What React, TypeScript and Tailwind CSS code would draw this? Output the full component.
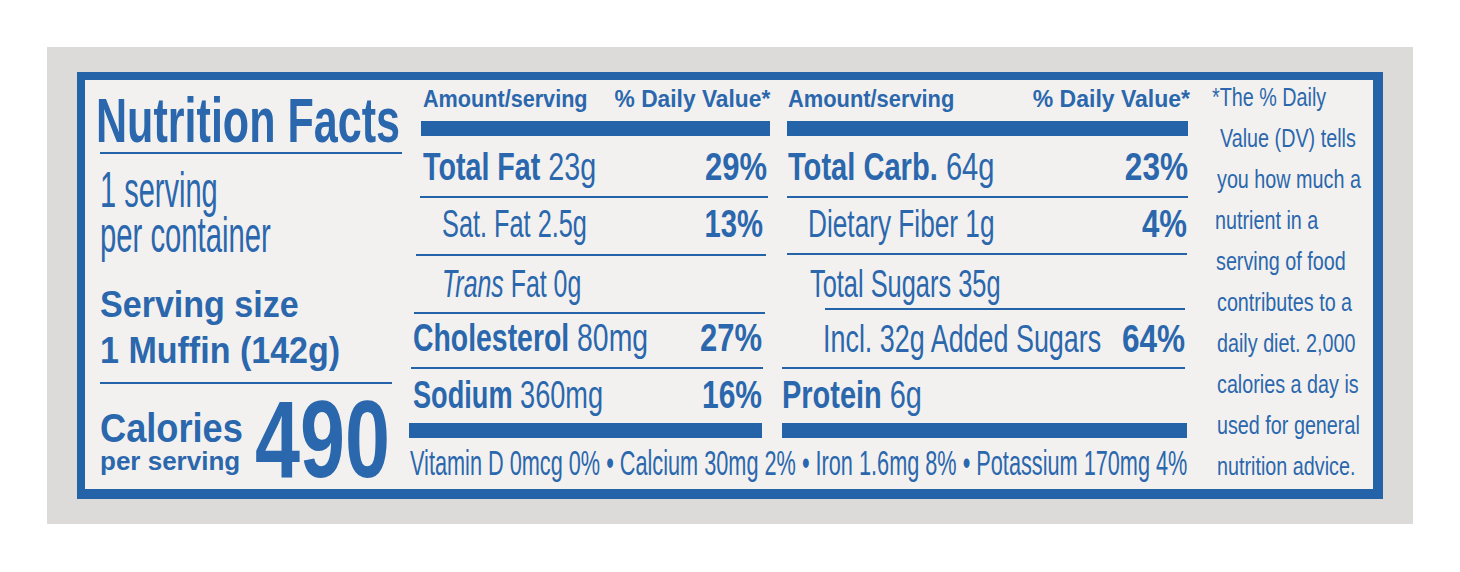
import React from 'react'

const Line = ({ className }: { className: string }) => <div className={`h-[2px] bg-[#2563a9] ${className}`} />

const Row = ({ className, left, right }: { className: string; left: React.ReactNode; right?: React.ReactNode }) => (
  <div className={`flex items-start justify-between ${className}`}>
    <div className="min-w-0 flex-1 whitespace-nowrap">{left}</div>
    {right}
  </div>
)

const LeftColumn = () => (
  <div className="flex w-[324px] shrink-0 flex-col pl-[15px] pr-[7px]">
    <div className="-ml-[4px] mt-[9px] h-[63px] whitespace-nowrap text-[63px] font-bold leading-none">
      <span className="inline-block origin-left scale-x-[0.684]">Nutrition Facts</span>
    </div>
    <Line className="w-[302px]" />
    <div className="mt-[14px] whitespace-nowrap text-[50px] leading-[45px]">
      <div className="h-[45px]">
        <span className="inline-block origin-left scale-x-[0.58]">1 serving</span>
      </div>
      <div className="h-[45px]">
        <span className="inline-block origin-left scale-x-[0.585]">per container</span>
      </div>
    </div>
    <div className="mt-[24px] whitespace-nowrap text-[37px] font-bold leading-[46px]">
      <div className="h-[46px]">
        <span className="inline-block origin-left scale-x-[0.92]">Serving size</span>
      </div>
      <div className="h-[46px]">
        <span className="inline-block origin-left scale-x-[0.92]">1 Muffin (142g)</span>
      </div>
    </div>
    <Line className="mt-[8px] w-[292px]" />
    <div className="flex h-[96px] items-start">
      <div className="w-[155px] shrink-0 whitespace-nowrap font-bold leading-none">
        <div className="mt-[24px] h-[40px] text-[40px]">
          <span className="inline-block origin-left scale-x-[0.905]">Calories</span>
        </div>
        <div className="h-[26px] text-[26px]">
          <span className="inline-block origin-left scale-x-[1.0]">per serving</span>
        </div>
      </div>
      <div className="h-[96px] whitespace-nowrap text-[110px] font-bold leading-none">
        <span className="inline-block origin-left scale-x-[0.735]">490</span>
      </div>
    </div>
  </div>
)

const Header = ({ className, a, b }: { className: string; a: string; b: string }) => (
  <div className={`mt-[8px] flex h-[23px] items-start justify-between text-[23px] font-bold leading-none ${className}`}>
    <div className="min-w-0 flex-1 whitespace-nowrap">
      <span className={`inline-block origin-left ${a}`}>Amount/serving</span>
    </div>
    <span className={`inline-block shrink-0 origin-right whitespace-nowrap ${b}`}>% Daily Value*</span>
  </div>
)

const FatColumn = () => (
  <div className="flex w-[361px] shrink-0 flex-col">
    <Header className="pl-[14px]" a="scale-x-[0.94]" b="scale-x-[0.99]" />
    <div className="ml-[12px] mt-[10px] h-[15px] bg-[#2563a9]" />
    <Row
      className="h-[60px] pl-[14px] pr-[3px] pt-[11px] text-[39px] leading-none"
      left={
        <span className="inline-block origin-left scale-x-[0.735]">
          <span className="font-bold">Total Fat</span> 23g
        </span>
      }
      right={<span className="inline-block shrink-0 origin-right scale-x-[0.795] font-bold">29%</span>}
    />
    <Line className="ml-[11px] mr-[2px]" />
    <Row
      className="h-[56px] pl-[33px] pr-[7px] pt-[7px] text-[38px] leading-none"
      left={<span className="inline-block origin-left scale-x-[0.666]">Sat. Fat 2.5g</span>}
      right={<span className="inline-block shrink-0 origin-right scale-x-[0.77] font-bold">13%</span>}
    />
    <Line className="ml-[7px] mr-[4px]" />
    <Row
      className="h-[56px] pl-[33px] pt-[9px] text-[38px] leading-none"
      left={
        <span className="inline-block origin-left scale-x-[0.655]">
          <span className="italic">Trans</span> Fat 0g
        </span>
      }
    />
    <Line className="ml-[5px] mr-[5px]" />
    <Row
      className="h-[53px] pl-[4px] pr-[8px] pt-[4px] text-[39px] leading-none"
      left={
        <span className="inline-block origin-left scale-x-[0.728]">
          <span className="font-bold">Cholesterol</span> 80mg
        </span>
      }
      right={<span className="inline-block shrink-0 origin-right scale-x-[0.795] font-bold">27%</span>}
    />
    <Line className="ml-[2px] mr-[7px]" />
    <Row
      className="h-[54px] pl-[4px] pr-[8px] pt-[6px] text-[39px] leading-none"
      left={
        <span className="inline-block origin-left scale-x-[0.696]">
          <span className="font-bold">Sodium</span> 360mg
        </span>
      }
      right={<span className="inline-block shrink-0 origin-right scale-x-[0.77] font-bold">16%</span>}
    />
    <div className="mr-[8px] h-[15px] bg-[#2563a9]" />
  </div>
)

const CarbColumn = () => (
  <div className="flex w-[408px] shrink-0 flex-col">
    <Header className="pl-[6px]" a="scale-x-[0.95]" b="scale-x-[1.0]" />
    <div className="ml-[5px] mr-[2px] mt-[10px] h-[15px] bg-[#2563a9]" />
    <Row
      className="h-[60px] pl-[6px] pr-[2px] pt-[11px] text-[39px] leading-none"
      left={
        <span className="inline-block origin-left scale-x-[0.746]">
          <span className="font-bold">Total Carb.</span> 64g
        </span>
      }
      right={<span className="inline-block shrink-0 origin-right scale-x-[0.81] font-bold">23%</span>}
    />
    <Line className="ml-[5px] mr-[2px]" />
    <Row
      className="h-[55px] pl-[26px] pr-[3px] pt-[7px] text-[38px] leading-none"
      left={<span className="inline-block origin-left scale-x-[0.69]">Dietary Fiber 1g</span>}
      right={<span className="inline-block shrink-0 origin-right scale-x-[0.82] font-bold">4%</span>}
    />
    <Line className="ml-[5px] mr-[3px]" />
    <Row
      className="h-[53px] pl-[28px] pt-[10px] text-[38px] leading-none"
      left={<span className="inline-block origin-left scale-x-[0.668]">Total Sugars 35g</span>}
    />
    <Line className="ml-[43px] mr-[5px]" />
    <Row
      className="h-[57px] pl-[41px] pr-[5px] pt-[10px] text-[38px] leading-none"
      left={<span className="inline-block origin-left scale-x-[0.708]">Incl. 32g Added Sugars</span>}
      right={<span className="inline-block shrink-0 origin-right scale-x-[0.83] font-bold">64%</span>}
    />
    <Line className="mr-[5px]" />
    <Row
      className="h-[54px] pt-[6px] text-[39px] leading-none"
      left={
        <span className="inline-block origin-left scale-x-[0.742]">
          <span className="font-bold">Protein</span> 6g
        </span>
      }
    />
    <div className="mr-[3px] h-[15px] bg-[#2563a9]" />
  </div>
)

const footnote = [
  { text: '*The % Daily', ml: 'ml-[22px]' },
  { text: 'Value (DV) tells', ml: 'ml-[30px]' },
  { text: 'you how much a', ml: 'ml-[27px]' },
  { text: 'nutrient in a', ml: 'ml-[25px]' },
  { text: 'serving of food', ml: 'ml-[26px]' },
  { text: 'contributes to a', ml: 'ml-[27px]' },
  { text: 'daily diet. 2,000', ml: 'ml-[27px]' },
  { text: 'calories a day is', ml: 'ml-[27px]' },
  { text: 'used for general', ml: 'ml-[27px]' },
  { text: 'nutrition advice.', ml: 'ml-[27px]' },
]

const Footnote = () => (
  <div className="-mt-[3px] flex w-[183px] shrink-0 flex-col whitespace-nowrap text-[26px] leading-[41px]">
    {footnote.map((l) => (
      <div key={l.text} className={`h-[41px] ${l.ml}`}>
        <span className="inline-block origin-left scale-x-[0.76]">{l.text}</span>
      </div>
    ))}
  </div>
)

export default function App() {
  return (
    <div className="h-[572px] w-[1460px] bg-white pl-[47px] pt-[47px] font-['Liberation_Sans',Arial,sans-serif]">
      <div className="h-[477px] w-[1366px] bg-[#dcdbda] pl-[30px] pt-[25px]">
        <div className="flex h-[427px] w-[1306px] overflow-hidden border-b-[10px] border-l-[8px] border-r-[10px] border-t-[8px] border-[#2563a9] bg-[#f2f1f0] text-[#2b67ac]">
          <LeftColumn />
          <div className="flex w-[781px] shrink-0 flex-col">
            <div className="flex gap-[12px]">
              <FatColumn />
              <CarbColumn />
            </div>
            <div className="mt-[7px] whitespace-nowrap pl-[1px] text-[35px] leading-none">
              <span className="inline-block origin-left scale-x-[0.62]">
                Vitamin D 0mcg 0% • Calcium 30mg 2% • Iron 1.6mg 8% • Potassium 170mg 4%
              </span>
            </div>
          </div>
          <Footnote />
        </div>
      </div>
    </div>
  )
}
